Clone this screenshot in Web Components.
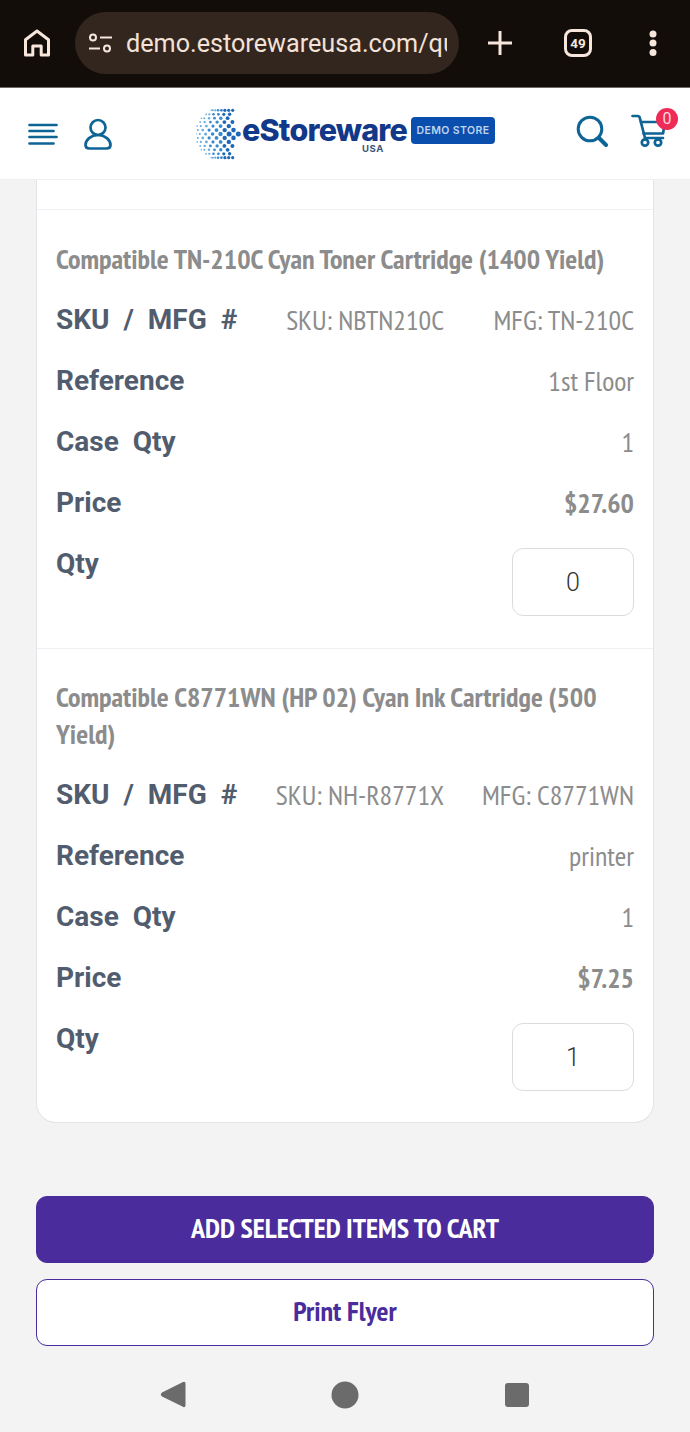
<!DOCTYPE html>
<html lang="en">
<head>
<meta charset="utf-8">
<title>Quick Order</title>
<style>
html, body { margin: 0; padding: 0; height: 1432px; overflow: hidden; background: #f3f3f4; }
body { display: flex; flex-direction: column; font-family: Roboto, "Liberation Sans", sans-serif; }
</style>
</head>
<body>
<browser-bar url="demo.estorewareusa.com/qu" tabs="49"></browser-bar>
<site-header></site-header>
<order-card>
  <order-item name="Compatible TN-210C Cyan Toner Cartridge (1400 Yield)" sku="SKU: NBTN210C" mfg="MFG: TN-210C" reference="1st Floor" case-qty="1" price="$27.60" qty="0"></order-item>
  <order-item name="Compatible C8771WN (HP 02) Cyan Ink Cartridge (500 Yield)" sku="SKU: NH-R8771X" mfg="MFG: C8771WN" reference="printer" case-qty="1" price="$7.25" qty="1"></order-item>
</order-card>
<action-button primary>ADD SELECTED ITEMS TO CART</action-button>
<action-button>Print Flyer</action-button>
<nav-bar></nav-bar>

<script>
const NARROW = '"PT Sans Narrow", "Roboto Condensed", sans-serif';

class BrowserBar extends HTMLElement {
    constructor() {
        super();
        this.attachShadow({ mode: 'open' });
        this.shadowRoot.innerHTML = `
        <style>
        :host { display: flex; align-items: center; box-sizing: border-box; background: #130d0a; border-bottom: 1px solid #6f6a64; height: 88px; padding: 0 0 1px 0; color: #f6e6dc; flex: none; }
        svg { display: block; flex: none; }
        .home { margin-left: 22px; }
        .pill { display: flex; align-items: center; width: 384px; height: 62px; margin-left: 23px; border-radius: 31px; background: #33261f; box-sizing: border-box; padding-left: 13px; overflow: hidden; }
        .url { margin-left: 14px; font: 400 25.2px Roboto, sans-serif; white-space: nowrap; overflow: hidden; width: 321px; color: #f3e2d8; }
        .plus { margin-left: 28px; }
        .tabs { display: flex; align-items: center; justify-content: center; margin-left: 51px; border: 3px solid #f6e6dc; border-radius: 8px; font: 700 13.5px Roboto, sans-serif; box-sizing: border-box; width: 28px; height: 28px; }
        .more { margin-left: 56px; }
        </style>
        <svg class="home" width="30" height="30" viewBox="0 0 30 30" fill="none" stroke="#f6e6dc" stroke-width="3" stroke-linejoin="round"><path d="M3.500 27V11.800L15 3l11.500 8.800V27h-7.300v-9h-8.400v9z"/></svg>
        <div class="pill">
            <svg width="24" height="20" viewBox="0 0 24 20" fill="none" stroke="#f6e6dc" stroke-width="2"><circle cx="5" cy="4.500" r="3"/><path d="M12 4.500h12M1 15.500h11"/><circle cx="19" cy="15.500" r="3"/></svg>
            <span class="url">${this.getAttribute('url')}</span>
        </div>
        <svg class="plus" width="26" height="26" viewBox="0 0 26 26" stroke="#f6e6dc" stroke-width="3"><path d="M13 1v24M1 13h24"/></svg>
        <div class="tabs">${this.getAttribute('tabs')}</div>
        <svg class="more" width="10" height="28" viewBox="0 0 10 28" fill="#f6e6dc"><circle cx="5" cy="5" r="3.500"/><circle cx="5" cy="14" r="3.500"/><circle cx="5" cy="23.500" r="3.500"/></svg>`;
    }
}

class StoreLogo extends HTMLElement {
    constructor() {
        super();
        this.attachShadow({ mode: 'open' });
        this.shadowRoot.innerHTML = `
        <style>
        :host { display: flex; align-items: flex-start; width: 300px; height: 54px; flex: none; }
        svg { display: block; flex: none; }
        .words { display: flex; flex-direction: column; align-items: flex-start; width: 166px; margin-left: -7px; margin-top: 9px; }
        .name { font: 800 30.500px/28px Inter, sans-serif; color: #12388a; letter-spacing: -0.8px; white-space: nowrap; }
        .usa { font: 700 9.500px/10px Inter, sans-serif; color: #3d5578; letter-spacing: .6px; margin: 0 0 0 120px; }
        .badge { margin: 10px 0 0 3px; width: 84px; height: 27px; background: #0b4fae; border-radius: 4px; color: #bfd4ef; font: 600 10.500px/27px Inter, sans-serif; text-align: center; letter-spacing: .4px; white-space: nowrap; }
        </style>
        <svg width="53" height="54" viewBox="0 0 53 54">${this.globe()}</svg>
        <div class="words"><span class="name">eStoreware</span><span class="usa">USA</span></div>
        <div class="badge">DEMO STORE</div>`;
    }
    // staggered rows of dots, squeezed and shrunk toward the left rim like a sphere
    globe() {
        let out = '';
        for (let row = -6; row <= 6; row++) {
            const y = 27 + row * 3.95;
            const half = Math.sqrt(Math.max(0, 676 - (y - 27) * (y - 27)));
            for (let i = 0; i <= 7; i++) {
                const t = (i + (row % 2 ? 0.5 : 0)) / 7.5;
                const x = 26 - half + 2 * half * Math.pow(t, 1.35) * 1.1;
                const limit = 37 + 9 * Math.max(0, 1 - Math.abs(y - 28) / 9);
                if (x > limit) continue;
                const r = 0.8 + 1.7 * Math.min(1, t * 1.5) * (1 - Math.abs(row) / 11);
                const c = t < 0.3 ? '#64addf' : t < 0.6 ? '#3a8ad2' : '#1f68b8';
                out += `<circle cx="${x.toFixed(1)}" cy="${y.toFixed(1)}" r="${r.toFixed(1)}" fill="${c}"/>`;
            }
        }
        return out;
    }
}

class SiteHeader extends HTMLElement {
    constructor() {
        super();
        this.attachShadow({ mode: 'open' });
        this.shadowRoot.innerHTML = `
        <style>
        :host { display: flex; align-items: center; background: #fff; border-bottom: 1px solid #eeeff0; box-sizing: border-box; height: 92px; padding-left: 28px; flex: none; }
        svg { display: block; flex: none; }
        .user { margin-left: 26px; }
        store-logo { margin-left: 84px; }
        .search { margin: -5px 0 0 80px; }
        .cart { position: relative; margin: -5px 0 0 23px; width: 38px; height: 34px; }
        .count { position: absolute; left: 25px; top: -6px; width: 22px; height: 22px; border-radius: 50%; background: #ee2b57; color: #ffd5dd; font: 400 16px/22px Roboto, sans-serif; text-align: center; }
        </style>
        <svg width="30" height="22" viewBox="0 0 30 22" stroke="#0f6496" stroke-width="2.700" stroke-linecap="round"><path d="M1.500 2h27M1.500 8h24M1.500 14h27M1.500 20.500h24"/></svg>
        <svg class="user" width="28" height="32" viewBox="0 0 28 32" fill="none" stroke="#0f6496" stroke-width="2.700"><circle cx="14" cy="9.500" r="7.500"/><path d="M14 17C7 17 1.500 22 1.500 27c0 2.500 1.500 3.500 4 3.500h17c2.500 0 4-1 4-3.500 0-5-5.500-10-12.500-10z"/></svg>
        <store-logo></store-logo>
        <svg class="search" width="32" height="32" viewBox="0 0 32 32" fill="none" stroke="#0f6496" stroke-width="3"><circle cx="14" cy="14" r="11.800"/><path d="M23 23l7 7" stroke-width="4" stroke-linecap="round"/></svg>
        <div class="cart">
            <svg width="38" height="34" viewBox="0 0 38 34" fill="none" stroke="#0f6496" stroke-width="2.700" stroke-linecap="round" stroke-linejoin="round"><path d="M1.500 2h5c1.200 0 2 .6 2.300 1.800L14 24h18"/><path d="M10 8h24l-2 11.500H12.500"/><circle cx="14" cy="28.500" r="3.200"/><circle cx="27" cy="28.500" r="3.200"/></svg>
            <span class="count">0</span>
        </div>`;
    }
}

class OrderCard extends HTMLElement {
    constructor() {
        super();
        this.attachShadow({ mode: 'open' });
        this.shadowRoot.innerHTML = `
        <style>
        :host { display: block; margin: 0 36px; height: 943px; box-sizing: border-box; background: #fff; border: 1px solid #e1e4e9; border-top: 0; border-radius: 0 0 20px 20px; padding-top: 29px; flex: none; }
        </style>
        <slot></slot>`;
    }
}

class OrderItem extends HTMLElement {
    constructor() {
        super();
        this.attachShadow({ mode: 'open' });
        const at = n => this.getAttribute(n);
        this.shadowRoot.innerHTML = `
        <style>
        :host { display: block; border-top: 1px solid #eff0f1; padding: 30px 19px 32px 19px; color: #8c8c8c; }
        :host(:last-child) { padding-top: 29px; }
        .name { font: 700 28px/37px ${NARROW}; margin-bottom: 12px; }
        .row { display: flex; justify-content: space-between; height: 61px; }
        .row.qty { height: 83px; }
        .label { font: 700 28px/61px Roboto, sans-serif; color: #515d6e; word-spacing: 7px; white-space: nowrap; }
        .value { font: 400 28px/62px ${NARROW}; white-space: nowrap; }
        .value b { font-weight: 700; }
        .sku { display: grid; grid-template-columns: auto 190px; text-align: right; }
        .box { width: 122px; height: 68px; margin-top: 15px; box-sizing: border-box; border: 1px solid #dcdcdc; border-radius: 11px; background: #fff; color: #333; text-align: center; font: 300 25px/67px Roboto, sans-serif; }
        </style>
        <div class="name">${at('name')}</div>
        <div class="row"><span class="label">SKU / MFG #</span><span class="value sku"><span>${at('sku')}</span><span>${at('mfg')}</span></span></div>
        <div class="row"><span class="label">Reference</span><span class="value">${at('reference')}</span></div>
        <div class="row"><span class="label">Case Qty</span><span class="value">${at('case-qty')}</span></div>
        <div class="row"><span class="label">Price</span><span class="value"><b>${at('price')}</b></span></div>
        <div class="row qty"><span class="label">Qty</span><div class="box">${at('qty')}</div></div>`;
    }
}

class ActionButton extends HTMLElement {
    constructor() {
        super();
        this.attachShadow({ mode: 'open' });
        this.shadowRoot.innerHTML = `
        <style>
        :host { display: block; height: 67px; margin: 16px 36px 0; box-sizing: border-box; border: 1px solid #4a2c9c; border-radius: 11px; background: #fff; color: #4a2c9c; font: 700 28px/62px ${NARROW}; text-align: center; flex: none; }
        :host([primary]) { margin-top: 73px; background: #4a2c9c; color: #fff; }
        </style>
        <slot></slot>`;
    }
}

class NavBar extends HTMLElement {
    constructor() {
        super();
        this.attachShadow({ mode: 'open' });
        this.shadowRoot.innerHTML = `
        <style>
        :host { display: flex; align-items: center; height: 87px; padding: 10px 0 0 160px; box-sizing: border-box; flex: none; }
        svg { display: block; flex: none; }
        </style>
        <svg width="26" height="27" viewBox="0 0 26 27" fill="#6b6b6b"><path d="M24 .800c1 0 1.500.7 1.500 2v21.400c0 1.300-.6 2-1.500 2-.5 0-1-.2-1.500-.6L2 15.500c-1.600-1-1.600-3 0-4L22.500 1.300c.5-.3 1-.5 1.500-.5z"/></svg>
        <svg style="margin-left:145px" width="28" height="28" viewBox="0 0 28 28" fill="#6b6b6b"><circle cx="14" cy="14" r="13.500"/></svg>
        <svg style="margin-left:146px" width="24" height="24" viewBox="0 0 24 24" fill="#6b6b6b"><rect width="24" height="24" rx="3"/></svg>`;
    }
}

customElements.define('browser-bar', BrowserBar);
customElements.define('store-logo', StoreLogo);
customElements.define('site-header', SiteHeader);
customElements.define('order-card', OrderCard);
customElements.define('order-item', OrderItem);
customElements.define('action-button', ActionButton);
customElements.define('nav-bar', NavBar);
</script>
</body>
</html>
